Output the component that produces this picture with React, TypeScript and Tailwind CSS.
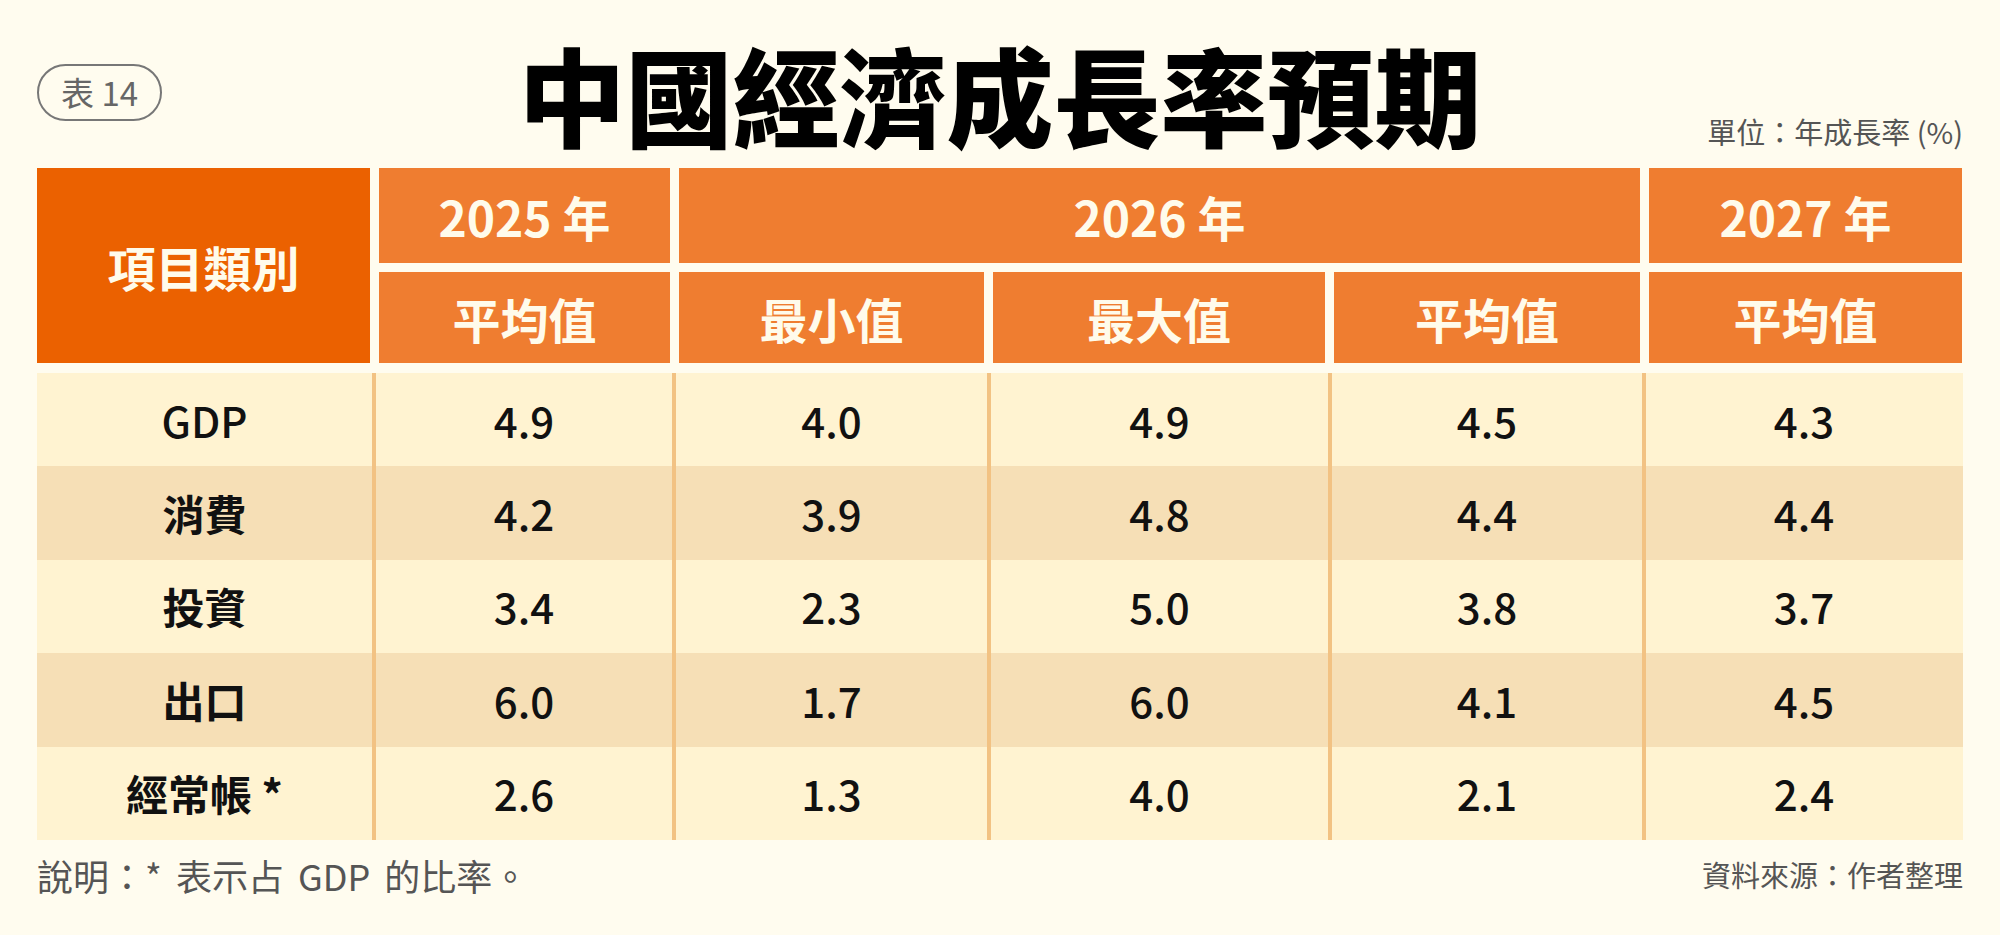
const FONT = { fontFamily: '"Noto Sans CJK TC", "Noto Sans", sans-serif' };

const ROWS = [
  { label: "GDP", weight: "font-medium", values: ["4.9", "4.0", "4.9", "4.5", "4.3"] },
  { label: "消費", weight: "font-bold", values: ["4.2", "3.9", "4.8", "4.4", "4.4"] },
  { label: "投資", weight: "font-bold", values: ["3.4", "2.3", "5.0", "3.8", "3.7"] },
  { label: "出口", weight: "font-bold", values: ["6.0", "1.7", "6.0", "4.1", "4.5"] },
  { label: "經常帳 *", weight: "font-bold", values: ["2.6", "1.3", "4.0", "2.1", "2.4"] },
];

const SUB_HEADERS = ["平均值", "最小值", "最大值", "平均值", "平均值"];

export default function App() {
  return (
    <div
      className="min-h-screen w-full bg-[#fffcef] px-[37px] text-[#111]"
      style={FONT}
    >
      {/* title bar */}
      <div className="grid h-[168px] grid-cols-[1fr_auto_1fr]">
        <div className="self-start pt-[64px]">
          <div className="flex h-[57px] w-[125px] items-center justify-center rounded-full border-2 border-[#777] text-[33px] leading-none text-[#666]">
            表 14
          </div>
        </div>
        <h1 className="pt-[39px] text-[107px] font-black leading-none text-black">
          中國經濟成長率預期
        </h1>
        <div className="justify-self-end pt-[117px] text-[29px] leading-none text-[#555]">
          單位：年成長率 (%)
        </div>
      </div>

      {/* header */}
      <div className="grid grid-cols-[333px_291px_305px_332px_306px_313px] grid-rows-[95px_91px] gap-[9px] text-[48px] font-bold leading-none text-[#fffbeb]">
        <div className="row-span-2 flex items-center justify-center bg-[#eb6100]">項目類別</div>
        <div className="flex items-center justify-center bg-[#ef7d30]">2025 年</div>
        <div className="col-span-3 flex items-center justify-center bg-[#ef7d30]">2026 年</div>
        <div className="flex items-center justify-center bg-[#ef7d30]">2027 年</div>
        {SUB_HEADERS.map((h, i) => (
          <div key={i} className="flex items-center justify-center bg-[#ef7d30]">
            {h}
          </div>
        ))}
      </div>

      {/* body */}
      <div className="mt-[10px]">
        {ROWS.map((row, r) => (
          <div
            key={row.label}
            className={`grid h-[93.4px] grid-cols-[335px_300px_315px_341px_314px_320px] text-[42px] leading-none ${
              r % 2 === 0 ? "bg-[#fff3d1]" : "bg-[#f6dfb6]"
            }`}
          >
            <div className={`flex items-center justify-center ${row.weight}`}>{row.label}</div>
            {row.values.map((v, i) => (
              <div
                key={i}
                className="flex items-center justify-center border-l-4 border-[#f2c283] font-medium"
              >
                {v}
              </div>
            ))}
          </div>
        ))}
      </div>

      {/* notes */}
      <div className="mt-[17px] flex items-center justify-between leading-none text-[#555]">
        <span className="text-[36px] [word-spacing:6px]">說明：* 表示占 GDP 的比率。</span>
        <span className="text-[29px]">資料來源：作者整理</span>
      </div>
    </div>
  );
}
